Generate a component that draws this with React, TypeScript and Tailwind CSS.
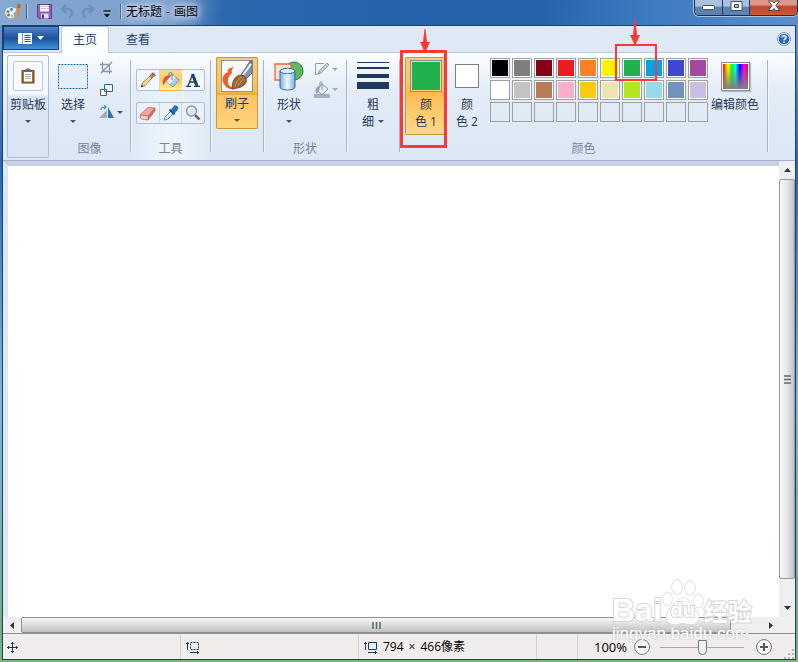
import React from 'react';

interface GroupProps {
  label?: string;
  className: string;
  children: React.ReactNode;
}

interface BigButtonProps {
  lines: React.ReactNode[];
  className?: string;
  children: React.ReactNode;
}

const swatches = [
  '#000000', '#7f7f7f', '#880015', '#ed1c24', '#ff7f27', '#fff200', '#22b14c', '#00a2e8', '#3f48cc', '#a349a4',
  '#ffffff', '#c3c3c3', '#b97a57', '#ffaec9', '#ffc90e', '#efe4b0', '#b5e61d', '#99d9ea', '#7092be', '#c8bfe7',
  '', '', '', '', '', '', '', '', '', '',
];

const Caret: React.FC<{ className?: string }> = ({ className = 'text-[#3f5673]' }) => (
  <svg width="6" height="3" viewBox="0 0 6 3" className={`shrink-0 ${className}`}>
    <path d="M0 0h6L3 3z" fill="currentColor" />
  </svg>
);

const Separator = () => (
  <div className="mt-[7px] h-[92px] w-px shrink-0 bg-[#a5b5ce] shadow-[1px_0_0_#f3f7fc]" />
);

const Group: React.FC<GroupProps> = ({ label, className, children }) => (
  <section className={`flex shrink-0 flex-col pt-1 ${className}`}>
    <div className="flex h-[78px] items-start">{children}</div>
    <div className="flex flex-1 items-center justify-center pt-0.5 text-[#76859c]">{label}</div>
  </section>
);

const BigButton: React.FC<BigButtonProps> = ({ lines, className = 'w-[42px]', children }) => (
  <button type="button" className={`flex shrink-0 flex-col items-center ${className}`}>
    <span className="mb-px flex h-[38px] items-center justify-center">{children}</span>
    {lines.map((line, i) => (
      <span key={i} className="flex h-[17px] items-center justify-center gap-1 whitespace-nowrap">
        {line}
      </span>
    ))}
  </button>
);

const Arrow: React.FC<{ height: number; className: string }> = ({ height, className }) => (
  <svg width="12" height={height} viewBox={`0 0 12 ${height}`} className={`absolute bottom-full ${className}`}>
    <path d={`M5.500 0h1L8 ${height - 11}h3L6 ${height}L1 ${height - 11}h3z`} fill="#ff3737" />
  </svg>
);

const TitleBar = () => (
  <header className="flex h-[25px] shrink-0 items-start justify-between bg-[linear-gradient(100deg,#86a8d2_0%,#7fa2ce_14%,#7398c8_22%,#2c68ae_28%,#2462ab_52%,#2563ad_68%,#3b79bf_80%,#5b8fcb_100%)]">
    <div className="flex h-[23px] items-center pl-1">
      <svg width="17" height="17" viewBox="0 0 17 17">
        <path d="M1 11C0 6 4 3 9 4c3 .5 4 2 3.500 4-.5 1.500-2.500 1-2.500 3 0 1.500 1.500 1.500.5 3C8 17 2 16 1 11z" fill="#e8f2fa" stroke="#7aa3c6" strokeWidth=".8" />
        <circle cx="4" cy="8.500" r="1.500" fill="#46a546" />
        <circle cx="7.500" cy="6.500" r="1.400" fill="#3478d4" />
        <circle cx="4.500" cy="12" r="1.500" fill="#e2483a" />
        <circle cx="8" cy="13" r="1.300" fill="#efb52c" />
        <path d="M13 5h3l-1 10h-1.500z" fill="#ef8422" />
        <path d="M12.500 5l1-4 2.500-.5 1 4.500z" fill="#b56c35" />
      </svg>
      <span className="ml-[5px] h-[15px] w-px bg-[#415b7c] shadow-[1px_0_0_#c3d2e6]" />
      <button type="button" aria-label="保存" className="ml-[10px]">
        <svg width="15" height="15" viewBox="0 0 15 15">
          <path d="M.5.5h14v14H2L.5 13z" fill="#8f62b5" stroke="#6b3b93" />
          <path d="M3 1h9v6.500H3z" fill="#f7f5fb" />
          <path d="M3 2.500h9M3 4.500h9" stroke="#cfc6e2" />
          <path d="M4 9.500h7.500v5H4z" fill="#e0dcec" />
          <path d="M5 10.500h2v4H5z" fill="#4d3770" />
        </svg>
      </button>
      <button type="button" aria-label="撤消" className="ml-2">
        <svg width="14" height="15" viewBox="0 0 14 15" fill="none" stroke="#6d90bd" strokeWidth="2.500">
          <path d="M2 5h6c5 0 5.500 6 1 8.500" />
          <path d="M6 1L2 5l4 4" />
        </svg>
      </button>
      <button type="button" aria-label="重做" className="ml-[7px]">
        <svg width="14" height="15" viewBox="0 0 14 15" fill="none" stroke="#6d90bd" strokeWidth="2.500">
          <path d="M12 5H6C1 5 .5 11 5 13.500" />
          <path d="M8 1l4 4-4 4" />
        </svg>
      </button>
      <button type="button" aria-label="自定义快速访问工具栏" className="ml-2 pt-1">
        <svg width="8" height="8" viewBox="0 0 8 8">
          <path d="M0 0h8v2H0zM0 3.500h8L4 8z" fill="#111d2d" stroke="#d8e3f0" strokeWidth=".4" />
        </svg>
      </button>
      <span className="ml-[9px] h-[15px] w-px bg-[#415b7c] shadow-[1px_0_0_#c3d2e6]" />
      <h1 className="ml-[5px] flex gap-1 rounded-full bg-white/15 text-xs text-black shadow-[0_0_8px_5px_rgba(255,255,255,0.15)] [text-shadow:0_0_7px_#dbe8f7,0_0_7px_#dbe8f7]">
        <span>无标题</span>
        <span>-</span>
        <span>画图</span>
      </h1>
    </div>
    <div className="flex h-4 overflow-hidden rounded-b-[5px] border border-t-0 border-[#182c4b] shadow-[0_0_0_1px_#a9c3e0]">
      <button type="button" aria-label="最小化" className="flex w-7 items-end justify-center border-r border-[#203a60] bg-linear-to-b from-[#a8c1de] from-40% to-[#5d83b2] to-50% pb-1">
        <svg width="13" height="6" viewBox="0 0 13 6"><rect x=".5" y=".5" width="12" height="4" rx="1" fill="#fff" stroke="#454f5e" /></svg>
      </button>
      <button type="button" aria-label="最大化" className="flex w-[27px] items-start justify-center border-r border-[#203a60] bg-linear-to-b from-[#a8c1de] from-40% to-[#5d83b2] to-50% pt-px">
        <svg width="13" height="11" viewBox="0 0 13 11">
          <path d="M1 .5h11v9H1zM4.500 3.500v3h4v-3z" fill="#fff" fillRule="evenodd" stroke="#454f5e" />
        </svg>
      </button>
      <button type="button" aria-label="关闭" className="flex w-[47px] items-start justify-center bg-linear-to-b from-[#dc998b] from-30% via-[#c1422b] via-45% to-[#c9583c]">
        <svg width="14" height="12" viewBox="0 0 14 12">
          <path d="M1.500 1h4L7 3l1.500-2h4L9 5.500l3.500 5h-4L7 8.500l-1.500 2h-4L5 5.500z" fill="#fff" stroke="#53424a" />
        </svg>
      </button>
    </div>
  </header>
);

const TabRow = () => (
  <nav className="flex h-[26px] shrink-0 items-start bg-[#dfe8f5] text-[#1e3f73]">
    <button type="button" aria-label="画图" className="flex h-6 w-14 items-center justify-center gap-[5px] border border-[#1b3c7b] bg-linear-to-b from-[#4f86c9] via-[#1e519f] via-50% to-[#3f95d7]">
      <svg width="14" height="11" viewBox="0 0 14 11">
        <path d="M0 0h14v11H0z" fill="#f6faff" />
        <path d="M4.500 0v11" stroke="#7d9cc8" />
        <path d="M6.500 2.500h6M6.500 4.500h6M6.500 6.500h6M6.500 8.500h6" stroke="#2c5ba4" />
      </svg>
      <svg width="7" height="4" viewBox="0 0 7 4"><path d="M0 0h7L3.500 4z" fill="#fff" /></svg>
    </button>
    <button type="button" className="relative z-10 ml-0.5 h-[27px] w-12 rounded-t-[3px] border border-b-0 border-[#b4c5dd] bg-[#fbfdfe] text-xs">主页</button>
    <button type="button" className="ml-[5px] h-[27px] w-12 text-xs">查看</button>
    <button type="button" aria-label="帮助" className="mt-1.5 mr-1 ml-auto">
      <svg width="14" height="14" viewBox="0 0 14 14">
        <circle cx="7" cy="7" r="6.500" fill="#fff" stroke="#6f93c4" />
        <circle cx="7" cy="7" r="5.300" fill="#2a63cf" />
        <path d="M5 5.500c0-2.500 4-2.500 4 0C9 7 7 6.800 7 8.600M7 9.600v1.300" fill="none" stroke="#fff" strokeWidth="1.500" />
      </svg>
    </button>
  </nav>
);

const toolCell = 'flex flex-1 items-center justify-center border-r border-[#cbd7e9] last:border-r-0';

const Tools = () => (
  <div className="mx-auto flex flex-col gap-[11px] pt-3">
    <div className="flex h-[22px] w-[69px] rounded-[2px] border border-[#afbdd5] bg-[#f2f7fc]">
      <button type="button" aria-label="铅笔" className={toolCell}>
        <svg width="16" height="16" viewBox="0 0 16 16">
          <path d="M1 15l1.500-4L11.500 2.500l2 2L5 13.500z" fill="#f6dc95" stroke="#7c6533" strokeWidth=".8" />
          <path d="M11 2.500l2-2 2.500 2.500-2 2z" fill="#d9575a" stroke="#8f3b3f" strokeWidth=".6" />
          <path d="M10 3.500l2.500 2.500" stroke="#5f8c57" strokeWidth="1.200" />
          <path d="M1 15l.7-2.300 1.600 1.600z" fill="#222" />
        </svg>
      </button>
      <button type="button" aria-label="用颜色填充" className="-my-px flex flex-1 items-center justify-center border-y border-[#f0b33a] bg-linear-to-b from-[#fbd89b] via-[#ffca55] to-[#fff0a0]">
        <svg width="18" height="16" viewBox="0 0 18 16">
          <path d="M10 2l7 6-6 7-7-6z" fill="#a9d0ee" stroke="#6c93b8" />
          <path d="M10 2.500l3.500 3-6 6.500L4.500 9z" fill="#fff" />
          <path d="M10 8V2c0-2-3-2-3 0v3" fill="none" stroke="#56728f" />
          <path d="M9 4C5 2 0 5 1 13c2-1 2-4 4-5z" fill="#e2532c" />
        </svg>
      </button>
      <button type="button" aria-label="文本" className={toolCell}>
        <svg width="16" height="14" viewBox="0 0 16 14" fill="none" stroke="#213f6a">
          <path d="M3 13L7.500 1.500" strokeWidth="1.300" />
          <path d="M7.500 1L12 13" strokeWidth="3" />
          <path d="M4.500 9h6M1 13.300h5M9 13.300h6" strokeWidth="1.300" />
        </svg>
      </button>
    </div>
    <div className="flex h-[22px] w-[69px] rounded-[2px] border border-[#afbdd5] bg-[#e9f0f8]">
      <button type="button" aria-label="橡皮擦" className={toolCell}>
        <svg width="17" height="15" viewBox="0 0 17 15" strokeWidth=".7">
          <path d="M1 9l8-7.500 7 .5-6.500 8z" fill="#f3a29c" stroke="#bc5b57" />
          <path d="M1 9l8.500 1-.5 4-7-1z" fill="#f8d0cb" stroke="#bc5b57" />
          <path d="M9.500 10L16 2v3l-7 9z" fill="#d8706c" stroke="#bc5b57" />
        </svg>
      </button>
      <button type="button" aria-label="颜色选取器" className={toolCell}>
        <svg width="16" height="16" viewBox="0 0 16 16">
          <path d="M1 15l1-3 6-6 2.500 2.500-6 6z" fill="#cfe7f7" stroke="#5e87ab" strokeWidth=".9" />
          <path d="M6.500 4.500l5 5" stroke="#1f4f8c" strokeWidth="2" />
          <path d="M8 5.500l3-4c2-2 5 1 3.500 3L11 8.500z" fill="#2a72bf" stroke="#1b4b8a" strokeWidth=".7" />
        </svg>
      </button>
      <button type="button" aria-label="放大镜" className={toolCell}>
        <svg width="16" height="16" viewBox="0 0 16 16">
          <path d="M10 10l4.500 4.500" stroke="#815f48" strokeWidth="2.500" />
          <circle cx="6.500" cy="6" r="5" fill="#d7e9f8" stroke="#8799ae" strokeWidth="1.500" />
          <path d="M3.500 6c0-2 1-3 3-3" fill="none" stroke="#fff" strokeWidth="1.500" />
        </svg>
      </button>
    </div>
  </div>
);

const Palette = () => (
  <div className="mt-px ml-px grid shrink-0 grid-cols-10 gap-0.5">
    {swatches.map((color, i) => (
      <div key={i} className="relative">
        <button
          type="button"
          aria-label={color || '自定义颜色'}
          className={`block size-5 border border-[#a0a0a0] ${color ? 'bg-white p-px' : ''}`}
        >
          {color && <span className="block h-full w-full" style={{ backgroundColor: color }} />}
        </button>
        {i === 6 && (
          <div className="pointer-events-none absolute -top-3.5 -left-[7px] z-20 h-[37px] w-[42px] border-2 border-[#ff3737]">
            <Arrow height={27} className="left-3" />
          </div>
        )}
      </div>
    ))}
  </div>
);

const Ribbon = () => (
  <div className="flex h-[109px] shrink-0 overflow-visible border-y border-t-[#b6c7de] border-b-[#9fb0ca] bg-linear-to-b from-[#fbfdfe] via-[#e3ecf7] via-35% to-[#dce7f5] text-xs text-[#1e395b]">
    <div className="mt-0.5 ml-1 flex h-[103px] w-[42px] shrink-0 justify-center rounded-[2px] border border-[#afbdd4] bg-linear-to-b from-[#f5f9fd] from-38% to-[#dae4f2] to-40% pt-px">
      <BigButton lines={['剪贴板', <Caret />]} className="w-10">
        <span className="flex size-[30px] items-center justify-center rounded-[2px] border border-[#bac6da] bg-[#f9fbfe]">
          <svg width="14" height="16" viewBox="0 0 14 16">
            <path d="M1 2.500h12V15H1z" fill="#a4713a" stroke="#674522" />
            <path d="M3 4h8v9.500H3z" fill="#fff" />
            <path d="M4 6.500h6M4 8.500h6M4 10.500h6" stroke="#9eb1c9" />
            <path d="M4 1.500h6V4H4zM5.500.5h3v2h-3z" fill="#67686b" />
          </svg>
        </span>
      </BigButton>
    </div>

    <Group label="图像" className="w-[81px]">
      <BigButton lines={['选择', <Caret />]} className="ml-[3px] w-[42px]">
        <svg width="30" height="25" viewBox="0 0 30 25">
          <rect x=".5" y=".5" width="29" height="24" fill="#e4eefa" stroke="#1c6daf" strokeDasharray="2 1" />
        </svg>
      </BigButton>
      <div className="ml-[5px] flex flex-col gap-2 pt-1">
        <button type="button" aria-label="裁剪" className="h-[14px]">
          <svg width="14" height="14" viewBox="0 0 14 14" fill="none" stroke="#8797ae" strokeWidth="1.300">
            <path d="M3.500 1v9.500H13M1 3.500h9.500V13M2 12L13 1" />
          </svg>
        </button>
        <button type="button" aria-label="重新调整大小" className="h-[14px]">
          <svg width="14" height="14" viewBox="0 0 14 14" fill="#f5fafe" stroke="#2268a8">
            <path d="M1.500 6.500h6v6h-6zM5.500 1.500h8v7h-8z" />
          </svg>
        </button>
        <button type="button" aria-label="旋转" className="flex h-[14px] items-center gap-0.5">
          <svg width="16" height="14" viewBox="0 0 16 14">
            <path d="M8 5v8H0z" fill="#a3adba" />
            <path d="M9 2v11h6z" fill="#2776b4" />
            <path d="M2 5c0-3 2-3 5-3M5 0l2 2-2 2" fill="none" stroke="#3b92d8" strokeWidth="1.200" />
          </svg>
          <Caret />
        </button>
      </div>
    </Group>
    <Separator />

    <Group label="工具" className="w-[79px] bg-[radial-gradient(ellipse_at_bottom,#f0f8fc_0%,transparent_75%)]">
      <Tools />
    </Group>
    <Separator />

    <Group className="w-[52px]">
      <BigButton
        lines={['刷子', <Caret className="text-[#695427]" />]}
        className="mx-auto h-[72px] w-[42px] rounded-[2px] bg-[linear-gradient(#f8cb83_0px,#fbc46a_22px,#ffba4e_36px,#c99a36_37px,#ffc462_38px,#ffd57f_72px)] shadow-[inset_0_0_0_1px_#c79a33]"
      >
        <svg width="32" height="32" viewBox="0 0 32 32">
          <rect x=".5" y=".5" width="31" height="31" fill="#f6f8fa" stroke="#95918a" />
          <path d="M13 7c-6 1-7 3-6 5-5 2-7 7-4 12 2 4 6 6 11 5-5-2-8-5-7-9 0-3 2-5 4-7-1-2 0-4 2-6z" fill="#e95f2e" />
          <path d="M20 15L29 1h2v12l-7 7z" fill="#8194a9" stroke="#4c6079" strokeWidth=".8" />
          <path d="M22 15l8-11" stroke="#eef3f8" strokeWidth="2" />
          <path d="M11 29c0-8 3-14 10-14 5 2 6 7 2 10-3 3-7 3-12 4z" fill="#9d6838" stroke="#6b421f" strokeWidth=".8" />
          <path d="M14 26c2-5 4-8 7-9M17 25c2-2 4-4 5-6" stroke="#d09d62" fill="none" />
        </svg>
      </BigButton>
    </Group>
    <Separator />

    <Group label="形状" className="w-[82px]">
      <BigButton lines={['形状', <Caret />]} className="ml-1 w-[42px]">
        <svg width="30" height="30" viewBox="0 0 30 30">
          <defs>
            <linearGradient id="cylinder">
              <stop stopColor="#75b2e6" />
              <stop offset=".5" stopColor="#f2faff" />
              <stop offset="1" stopColor="#73aee4" />
            </linearGradient>
          </defs>
          <circle cx="20" cy="10" r="9" fill="#62b85b" stroke="#23892c" />
          <path d="M1 3h16v16H1z" fill="#fbe2d8" stroke="#e56a3d" strokeWidth="1.300" />
          <path d="M6 10v16c0 4 15 4 15 0V10z" fill="url(#cylinder)" stroke="#286caf" />
          <ellipse cx="13.500" cy="10" rx="7.500" ry="2.700" fill="#dff0fc" stroke="#286caf" />
        </svg>
      </BigButton>
      <div className="ml-1 flex flex-col gap-1 pt-1">
        <button type="button" aria-label="形状轮廓" className="flex h-4 items-center gap-0.5">
          <svg width="16" height="16" viewBox="0 0 16 16" fill="none" stroke="#8e9eb5">
            <path d="M10 2.500H1.500v11l4-1" />
            <path d="M4 13l1-3 8-8 2 2-8 8z" fill="#c3cedc" />
          </svg>
          <Caret className="text-[#9ba9bd]" />
        </button>
        <button type="button" aria-label="形状填充" className="flex h-[17px] items-center gap-0.5">
          <svg width="16" height="17" viewBox="0 0 16 17">
            <path d="M0 13h16v4H0z" fill="#a3b1c6" />
            <path d="M8 3l6 5-6 6-5-5z" fill="#e6ecf4" stroke="#8696ad" />
            <path d="M8 9V2c0-2-2-2-2 0v3" fill="none" stroke="#8696ad" />
            <path d="M6 5c-3 0-5 2-4 8l3-3z" fill="#8e9eb5" />
          </svg>
          <Caret className="text-[#9ba9bd]" />
        </button>
      </div>
    </Group>
    <Separator />

    <Group className="w-[52px]">
      <BigButton lines={['粗', <>细<Caret /></>]} className="mx-auto w-[42px]">
        <svg width="32" height="28" viewBox="0 0 32 28" fill="#1e395b">
          <path d="M0 0h32v1H0zM0 5h32v2H0zM0 12h32v4H0zM0 20h32v7H0z" />
        </svg>
      </BigButton>
    </Group>
    <Separator />

    <Group label="颜色" className="w-[367px]">
      <div className="relative ml-[5px]">
        <BigButton
          lines={['颜', '色 1']}
          className="h-[78px] w-[42px] rounded-[2px] bg-[linear-gradient(#f8cb83_0px,#fbc46a_24px,#ffba4e_36px,#ffc462_46px,#ffd98a_78px)] shadow-[inset_0_0_0_1px_#c79a33]"
        >
          <span className="size-8 border border-[#8f8f8f] bg-[#fbd58c] p-px">
            <span className="block h-full w-full bg-[#22b14c]" />
          </span>
        </BigButton>
        <div className="pointer-events-none absolute -top-[7px] -left-[5px] z-20 h-[98px] w-[47px] border-3 border-[#ff3737]">
          <Arrow height={24} className="left-4" />
        </div>
      </div>
      <BigButton lines={['颜', '色 2']} className="w-10">
        <span className="size-6 border border-[#808080] bg-white" />
      </BigButton>
      <div className="w-0.5" />
      <Palette />
      <BigButton lines={['编辑颜色']} className="ml-0.5 w-[50px]">
        <span className="size-[29px] border border-[#8d8d8d] bg-white p-px shadow-[1px_1px_1px_#b4bdc9]">
          <span className="block h-full w-full bg-[linear-gradient(to_bottom,transparent_10%,#808080),linear-gradient(to_right,#f00,#ff0_20%,#0f0_36%,#0ff_50%,#00f_67%,#f0f_84%,#f00)]" />
        </span>
      </BigButton>
    </Group>
    <Separator />
  </div>
);

const scrollThumbV = 'bg-linear-to-r from-[#f7f7f7] via-[#e6e6e8] to-[#c2c3c7]';
const scrollThumbH = 'bg-linear-to-b from-[#f7f7f7] via-[#dcdcdd] to-[#c0c1c2]';

const Workspace = () => (
  <main className="flex min-h-0 flex-1">
    <div className="flex min-w-0 flex-1 flex-col">
      <div className="flex min-h-0 flex-1 border-t-[5px] border-l-[5px] border-t-[#c8d1e3] border-l-[#dce6f4] bg-white" />
      <div className="flex h-4 shrink-0 bg-[#efefef]">
        <button type="button" aria-label="向左滚动" className="flex w-[18px] items-center justify-center">
          <svg width="4" height="7" viewBox="0 0 4 7"><path d="M4 0v7L0 3.500z" fill="#333" /></svg>
        </button>
        <div className={`flex flex-1 items-center justify-center rounded-[2px] border border-[#909092] ${scrollThumbH}`}>
          <svg width="9" height="7" viewBox="0 0 9 7"><path d="M1 0v7M4.500 0v7M8 0v7" stroke="#66676a" strokeWidth="1.500" /></svg>
        </div>
        <div className="w-8" />
        <button type="button" aria-label="向右滚动" className="flex w-4 items-center justify-center">
          <svg width="4" height="7" viewBox="0 0 4 7"><path d="M0 0v7l4-3.500z" fill="#333" /></svg>
        </button>
      </div>
    </div>
    <div className="flex w-4 shrink-0 flex-col bg-[#efefef]">
      <button type="button" aria-label="向上滚动" className="flex h-[18px] items-center justify-center">
        <svg width="7" height="4" viewBox="0 0 7 4"><path d="M0 4h7L3.500 0z" fill="#333" /></svg>
      </button>
      <div className={`flex flex-1 items-center justify-center rounded-[2px] border border-[#97989b] ${scrollThumbV}`}>
        <svg width="7" height="9" viewBox="0 0 7 9"><path d="M0 1h7M0 4.500h7M0 8h7" stroke="#66676a" strokeWidth="1.500" /></svg>
      </div>
      <div className="h-5" />
      <button type="button" aria-label="向下滚动" className="flex h-[18px] items-center justify-center">
        <svg width="7" height="4" viewBox="0 0 7 4"><path d="M0 0h7L3.500 4z" fill="#333" /></svg>
      </button>
      <div className="h-4" />
    </div>
  </main>
);

const StatusBar = () => (
  <footer className="flex h-[26px] shrink-0 items-stretch border-t border-[#8f8f8f] bg-[#f0edec] pt-px text-xs text-black">
    <div className="flex w-[178px] items-center border-r border-[#d3d1d0] pl-1">
      <svg width="11" height="11" viewBox="0 0 11 11" fill="none" stroke="#1e395b">
        <path d="M5.500 0v11M0 5.500h11M4 1.500h3M4 9.500h3M1.500 4v3M9.500 4v3" />
      </svg>
    </div>
    <div className="flex w-[178px] items-center border-r border-[#d3d1d0] pl-[5px]">
      <svg width="14" height="13" viewBox="0 0 14 13" fill="none" stroke="#1e395b">
        <path d="M4.500 1.500h8v7h-8z" strokeDasharray="2 1" />
        <path d="M1.500 1v8M0 2.500h3M4 11.500h9M11.500 10v3" />
      </svg>
    </div>
    <div className="flex w-[178px] items-center gap-[5px] border-r border-[#d3d1d0] pl-[5px]">
      <svg width="14" height="13" viewBox="0 0 14 13" fill="none" stroke="#1e395b">
        <path d="M4.500 1.500h8v7h-8z" fill="#e3f3fd" />
        <path d="M1.500 1v8M0 2.500h3M4 11.500h9M11.500 10v3" />
      </svg>
      <span className="flex gap-[5px]">
        <span>794</span>
        <span>×</span>
        <span>466像素</span>
      </span>
    </div>
    <div className="w-[41px] border-r border-[#d3d1d0]" />
    <div className="ml-auto flex items-center">
      <label htmlFor="zoom" className="mr-[7px] text-[13px] leading-4">100%</label>
      <button type="button" aria-label="缩小">
        <svg width="16" height="16" viewBox="0 0 16 16">
          <circle cx="8" cy="8" r="7.500" fill="#f7f7f7" stroke="#77797c" />
          <path d="M4 8h8" stroke="#55575b" strokeWidth="2" />
        </svg>
      </button>
      <input
        id="zoom"
        type="range"
        defaultValue={50}
        className="mr-3 ml-2.5 h-4 w-[84px] appearance-none bg-[linear-gradient(#a7a7a7,#a7a7a7)] bg-[length:100%_1px] bg-center bg-no-repeat [&::-webkit-slider-thumb]:h-[15px] [&::-webkit-slider-thumb]:w-[9px] [&::-webkit-slider-thumb]:appearance-none [&::-webkit-slider-thumb]:rounded-t-[2px] [&::-webkit-slider-thumb]:rounded-b-full [&::-webkit-slider-thumb]:border [&::-webkit-slider-thumb]:border-[#77797c] [&::-webkit-slider-thumb]:bg-[#f0f0f0]"
      />
      <button type="button" aria-label="放大">
        <svg width="16" height="16" viewBox="0 0 16 16">
          <circle cx="8" cy="8" r="7.500" fill="#f7f7f7" stroke="#77797c" />
          <path d="M4 8h8M8 4v8" stroke="#55575b" strokeWidth="2" />
        </svg>
      </button>
      <svg width="10" height="10" viewBox="0 0 10 10" className="mr-px ml-3 self-end" fill="#b5b3b3">
        <path d="M8 0h2v2H8zM8 4h2v2H8zM8 8h2v2H8zM4 4h2v2H4zM4 8h2v2H4zM0 8h2v2H0z" />
      </svg>
    </div>
  </footer>
);

const Watermark = () => (
  <div className="pointer-events-none absolute right-11 bottom-5 z-30 w-[142px] text-white">
    <div className="flex h-[50px] items-end leading-none font-bold [paint-order:stroke] [-webkit-text-stroke:2px_#d6d6d6]">
      <span className="font-['Liberation_Sans'] text-[32px] leading-8">Bai</span>
      <span className="relative">
        <svg width="42" height="48" viewBox="0 0 42 48" fill="#fff" stroke="#d9d9d9" strokeWidth="1.500">
          <ellipse cx="5.500" cy="21" rx="4.500" ry="6.500" />
          <ellipse cx="15" cy="9" rx="5" ry="7" />
          <ellipse cx="28" cy="10" rx="5" ry="7" />
          <ellipse cx="36.500" cy="23" rx="4.500" ry="6.500" />
          <path d="M21 20c6 0 8 7 12 11 5 5 5 14-2 15-4 1-6-1-10-1s-6 2-10 1c-8-1-8-10-3-15 5-4 7-11 13-11z" />
        </svg>
        <span className="absolute inset-x-0 bottom-1 text-center font-['Liberation_Sans'] text-xl leading-6">du</span>
      </span>
      <span className="pb-0.5 text-2xl leading-6">经验</span>
    </div>
    <p className="font-['Liberation_Sans'] text-[17px] leading-4 whitespace-nowrap [text-shadow:0_0_1px_#bbb,0_0_2px_#ccc]">jingyan.baidu.com</p>
  </div>
);

export default function App() {
  return (
    <div className="relative flex h-screen flex-col overflow-hidden bg-[linear-gradient(#6f9fd3,#2a68b0_25%,#79b9e0_60%,#6fae83_95%,#79b28c)] font-['Open_Sans','Noto_Sans_CJK_SC',sans-serif]">
      <TitleBar />
      <div className="mx-0.5 mb-0.5 flex min-h-0 flex-1 flex-col border border-[#1d4264]">
        <TabRow />
        <Ribbon />
        <Workspace />
        <StatusBar />
      </div>
      <Watermark />
    </div>
  );
}
